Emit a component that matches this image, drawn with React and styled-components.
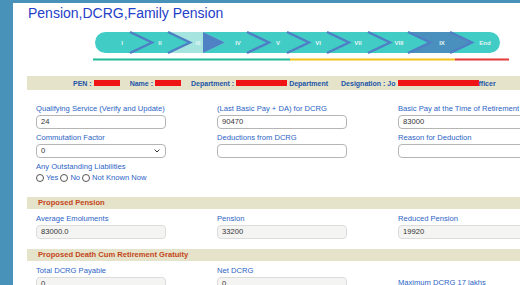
import React from 'react';
import styled, { createGlobalStyle } from 'styled-components';

const Global = createGlobalStyle`
    html, body {
        margin: 0;
        padding: 0;
        overflow: hidden;
        background: #4891b9;
        font-family: "Liberation Sans", Arial, sans-serif;
    }
    #root {
        width: 520px;
        height: 285px;
        overflow: hidden;
        padding: 3px 0 0 13px;
        box-sizing: border-box;
    }
`

const Panel = styled.div`
    width: 600px;
    height: 300px;
    background: #fff;
`

const Title = styled.h1`
    margin: 0;
    padding: 2px 0 0 15px;
    font-size: 14px;
    line-height: 16px;
    font-weight: normal;
    color: #2340c8;
`

const StepSvg = styled.svg`
    display: block;
    margin: 8px 0 0 80px;
`

const Content = styled.div`
    margin: 14px 0 0 14px;
`

const InfoBar = styled.div`
    display: flex;
    align-items: center;
    height: 14px;
    padding-left: 46px;
    background: #e5e3c9;
    font-size: 7px;
    font-weight: bold;
    color: #2255a8;
    white-space: nowrap;

    &>span {
        display: flex;
        align-items: center;
        margin-right: 10px;
    }
    &>span:last-child {
        margin-left: 3px;
    }
`

const Redact = styled.i`
    display: inline-block;
    width: ${p => p.w}px;
    height: 6px;
    margin-left: 2px;
    background: #f01515;
`

const Grid = styled.div`
    display: grid;
    grid-template-columns: repeat(3, 181px);
    row-gap: 3px;
    padding: ${p => p.pad || '13px 0 0 9px'};
`

const Field = styled.div`
    display: flex;
    flex-direction: column;
    padding-top: ${p => p.drop || 0}px;
`

const Label = styled.label`
    font-size: 7.6px;
    line-height: 11px;
    color: #2b63c6;
    margin-bottom: 1px;
    white-space: nowrap;
`

const Input = styled.div`
    box-sizing: border-box;
    width: 130px;
    height: 14px;
    border: 1px solid ${p => p.readOnly ? '#dcdcdc' : '#b5b5b5'};
    border-radius: 4px;
    background: ${p => p.readOnly ? '#f4f4f2' : '#fff'};
    padding-left: 4px;
    font-size: 7.6px;
    line-height: 12px;
    color: #333;
    display: flex;
    align-items: center;
    justify-content: space-between;
`

const Caret = styled.svg`
    margin-right: 5px;
`

const Radios = styled.div`
    display: flex;
    align-items: center;
    height: 11px;
    margin-top: -1px;
    font-size: 7.6px;
    color: #2b63c6;

    &>span {
        display: flex;
        align-items: center;
        margin-right: 2px;
    }
`

const Dot = styled.i`
    display: inline-block;
    box-sizing: border-box;
    width: 8px;
    height: 8px;
    border: 1px solid #555;
    border-radius: 50%;
    margin-right: 2px;
`

const Section = styled.div`
    height: 12px;
    margin-top: ${p => p.top}px;
    padding-left: 11px;
    background: #e5e3c9;
    font-size: 7.6px;
    line-height: 12px;
    font-weight: bold;
    color: #c4461c;
`

const arrows = [37, 75, 154, 194, 234, 275, 315, 357];
const labels = [
    ['I', 29], ['II', 67], ['III', 105], ['IV', 145], ['V', 185],
    ['VI', 225], ['VII', 265], ['VIII', 306], ['IX', 349], ['End', 392],
];

function seg(a, b) {
    return `${a},3 ${b},3 ${b + 22},13.5 ${b},24 ${a},24 ${a + 22},13.5`;
}

function Stepper() {
    return (
        <StepSvg width="420" height="33" viewBox="0 0 420 33">
            <rect x="2" y="3" width="405" height="21" rx="10.5" fill="#41ccc6" />
            <polygon points={seg(75, 110)} fill="#a6e4e0" />
            <polygon points="110,3 132,13.5 110,24" fill="#4f82c4" />
            <polygon points={seg(315, 357)} fill="#4a90be" />
            {arrows.map(x => (
                <polyline key={x} points={`${x},3 ${x + 22},13.5 ${x},24`}
                    fill="none" stroke="#4f7ec4" strokeWidth="2.4" />
            ))}
            {labels.map(([t, x]) => (
                <text key={t} x={x} y="15.8" textAnchor="middle" fontSize="6"
                    fontWeight="bold" fill="#e2f6f4"
                    fontFamily="Liberation Sans, Arial, sans-serif">{t}</text>
            ))}
            <rect x="0" y="29.5" width="197" height="2" fill="#22b99a" />
            <rect x="197" y="29.5" width="165" height="2" fill="#f1c11d" />
            <rect x="362" y="29.5" width="54" height="2" fill="#e6393a" />
        </StepSvg>
    );
}

function App() {
    return (
        <Panel>
            <Global />
            <Title>Pension,DCRG,Family Pension</Title>
            <Stepper />
            <Content>
                <InfoBar>
                    <span>PEN :<Redact w={26} /></span>
                    <span>Name :<Redact w={26} /></span>
                    <span>Department :<Redact w={51} />&nbsp;Department</span>
                    <span>Designation : Jo<Redact w={81} />fficer</span>
                </InfoBar>

                <Grid>
                    <Field>
                        <Label>Qualifying Service (Verify and Update)</Label>
                        <Input>24</Input>
                    </Field>
                    <Field>
                        <Label>(Last Basic Pay + DA) for DCRG</Label>
                        <Input>90470</Input>
                    </Field>
                    <Field>
                        <Label>Basic Pay at the Time of Retirement</Label>
                        <Input>83000</Input>
                    </Field>
                    <Field>
                        <Label>Commutation Factor</Label>
                        <Input>
                            0
                            <Caret width="6" height="4" viewBox="0 0 6 4">
                                <path d="M0.6 0.6 L3 3 L5.4 0.6" fill="none" stroke="#333" strokeWidth="1" />
                            </Caret>
                        </Input>
                    </Field>
                    <Field>
                        <Label>Deductions from DCRG</Label>
                        <Input />
                    </Field>
                    <Field>
                        <Label>Reason for Deduction</Label>
                        <Input />
                    </Field>
                    <Field>
                        <Label>Any Outstanding Liabilities</Label>
                        <Radios>
                            <span><Dot />Yes</span>
                            <span><Dot />No</span>
                            <span><Dot />Not Known Now</span>
                        </Radios>
                    </Field>
                </Grid>

                <Section top={14}>Proposed Pension</Section>
                <Grid pad="4px 0 0 9px">
                    <Field>
                        <Label>Average Emoluments</Label>
                        <Input readOnly>83000.0</Input>
                    </Field>
                    <Field>
                        <Label>Pension</Label>
                        <Input readOnly>33200</Input>
                    </Field>
                    <Field>
                        <Label>Reduced Pension</Label>
                        <Input readOnly>19920</Input>
                    </Field>
                </Grid>

                <Section top={10}>Proposed Death Cum Retirement Gratuity</Section>
                <Grid pad="4px 0 0 9px">
                    <Field>
                        <Label>Total DCRG Payable</Label>
                        <Input readOnly>0</Input>
                    </Field>
                    <Field>
                        <Label>Net DCRG</Label>
                        <Input readOnly>0</Input>
                    </Field>
                    <Field drop={12}>
                        <Label>Maximum DCRG 17 lakhs</Label>
                        <Input readOnly />
                    </Field>
                </Grid>
            </Content>
        </Panel>
    );
}

export default App;
